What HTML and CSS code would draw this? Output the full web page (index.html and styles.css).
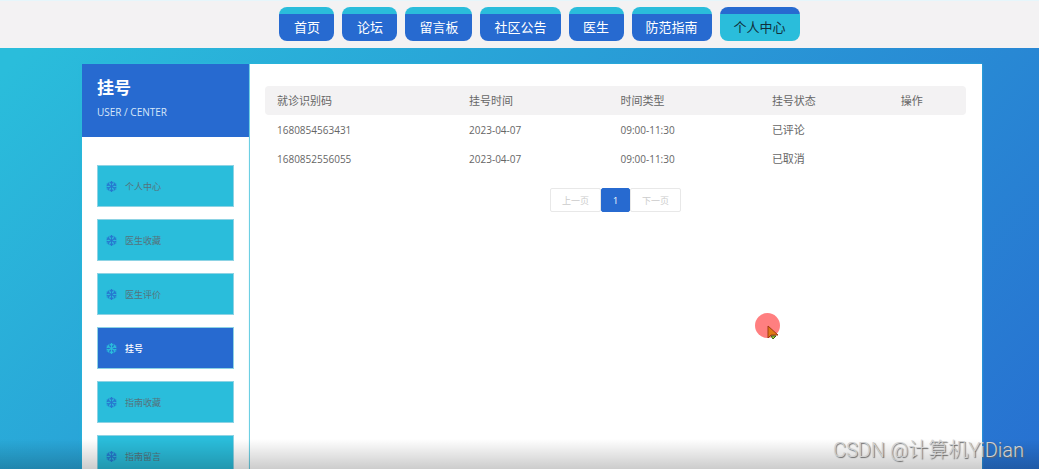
FILE: index.html
```html
<!DOCTYPE html>
<html lang="zh-CN">
<head>
<meta charset="utf-8">
<meta name="viewport" content="width=device-width, initial-scale=1">
<title>挂号</title>
<link rel="stylesheet" href="styles.css">
</head>
<body>
<svg class="symbols" aria-hidden="true">
  <symbol id="snow" viewBox="0 0 24 24">
    <g fill="none" stroke="currentColor" stroke-width="2.4">
      <g id="arm"><path d="M12 12V0M8 2l4 4 4-4"/></g>
      <use href="#arm" transform="rotate(60 12 12)"/>
      <use href="#arm" transform="rotate(120 12 12)"/>
      <use href="#arm" transform="rotate(180 12 12)"/>
      <use href="#arm" transform="rotate(240 12 12)"/>
      <use href="#arm" transform="rotate(300 12 12)"/>
    </g>
  </symbol>
</svg>
<header class="topbar">
  <nav class="topnav">
    <a class="tab" href="#">首页</a>
    <a class="tab" href="#">论坛</a>
    <a class="tab" href="#">留言板</a>
    <a class="tab" href="#">社区公告</a>
    <a class="tab" href="#">医生</a>
    <a class="tab" href="#">防范指南</a>
    <a class="tab tab-active" href="#">个人中心</a>
  </nav>
</header>
<div class="page">
  <aside class="sidebar">
    <div class="side-head">
      <h1 class="side-title">挂号</h1>
      <p class="side-sub">USER / CENTER</p>
    </div>
    <nav class="side-nav">
      <a class="side-link" href="#"><svg class="snow"><use href="#snow"/></svg>个人中心</a>
      <a class="side-link" href="#"><svg class="snow"><use href="#snow"/></svg>医生收藏</a>
      <a class="side-link" href="#"><svg class="snow"><use href="#snow"/></svg>医生评价</a>
      <a class="side-link side-active" href="#"><svg class="snow"><use href="#snow"/></svg>挂号</a>
      <a class="side-link" href="#"><svg class="snow"><use href="#snow"/></svg>指南收藏</a>
      <a class="side-link" href="#"><svg class="snow"><use href="#snow"/></svg>指南留言</a>
    </nav>
  </aside>
  <main class="content">
    <table class="records">
      <colgroup><col class="c-code"><col class="c-date"><col class="c-time"><col class="c-state"><col class="c-action"></colgroup>
      <thead>
        <tr><th>就诊识别码</th><th>挂号时间</th><th>时间类型</th><th>挂号状态</th><th>操作</th></tr>
      </thead>
      <tbody>
        <tr><td class="num">1680854563431</td><td class="num">2023-04-07</td><td class="num">09:00-11:30</td><td>已评论</td><td></td></tr>
        <tr><td class="num">1680852556055</td><td class="num">2023-04-07</td><td class="num">09:00-11:30</td><td>已取消</td><td></td></tr>
      </tbody>
    </table>
    <div class="pager">
      <button class="page-btn" type="button" disabled>上一页</button>
      <button class="page-btn page-current" type="button">1</button>
      <button class="page-btn" type="button" disabled>下一页</button>
    </div>
  </main>
</div>
<div class="shade"></div>
<div class="click-mark">
  <svg class="pointer" viewBox="0 0 12 16"><path d="M1 1v12l3-3h7z" fill="#e07a12" stroke="#a03a14"/><path d="M4 11l2 3 3-3z" fill="#a4dc3c" stroke="#3c5a14"/></svg>
</div>
<div class="watermark">CSDN @计算机YiDian</div>
</body>
</html>
```
FILE: styles.css
```css
* { box-sizing: border-box; }

body {
  margin: 0;
  height: 100vh;
  overflow: hidden;
  display: flex;
  flex-direction: column;
  font-family: "Open Sans", "Noto Sans CJK SC", sans-serif;
  font-size: 11px;
  color: #666;
  background: linear-gradient(135deg, #2abddb 5%, #276ad0 108%);
}

a { color: inherit; text-decoration: none; }

.symbols { position: absolute; width: 0; height: 0; }

.topbar {
  flex: none;
  height: 48px;
  padding: 6px 0 0 40px;
  background: #f3f2f3;
  border-top: 1px solid #e6f6fb;
}

.topnav { display: flex; justify-content: center; gap: 8px; }

.tab {
  min-width: 55px;
  height: 34px;
  padding: 8px 14px 0;
  border-radius: 8px;
  font-size: 13px;
  line-height: 24px;
  text-align: center;
  color: #fff;
  background: linear-gradient(#2abddb 7px, #276ad0 7px);
}

.tab-active {
  color: #10303c;
  background: linear-gradient(#276ad0 7px, #2abddb 7px);
}

.page {
  flex: 1;
  display: flex;
  margin: 16px 57px 0 82px;
}

.sidebar {
  flex: none;
  width: 168px;
  background: #fff;
  border-right: 1px solid #8ed8e6;
  box-shadow: 0 0 3px #2abddb;
}

.side-head {
  height: 73px;
  padding: 12px 15px;
  background: #276ad0;
  color: #fff;
}

.side-title { margin: 0; font-size: 17px; line-height: 24px; }

.side-sub { margin: 4px 0 0; font-size: 10px; line-height: 16px; color: #d7e7f9; }

.side-nav {
  display: flex;
  flex-direction: column;
  gap: 12px;
  padding: 28px 15px 0;
}

.side-link {
  display: flex;
  align-items: center;
  gap: 8px;
  height: 42px;
  padding: 0 8px;
  border: 1px solid #8dd3e4;
  font-size: 9px;
  color: #55737c;
  background: #2abddb;
}

.side-active { color: #fff; font-weight: 500; background: #276ad0; }

.snow { width: 11px; height: 11px; color: #2678d0; }

.side-active .snow { color: #2abddb; }

.content {
  flex: 1;
  min-width: 0;
  padding: 22px 16px 0 15px;
  background: #fff;
  box-shadow: 0 0 2px #2abddb;
}

.records {
  width: 100%;
  table-layout: fixed;
  border-collapse: separate;
  border-spacing: 0;
  text-align: left;
}

.c-code { width: 27.4%; }
.c-date { width: 21.6%; }
.c-time { width: 21.6%; }
.c-state { width: 18.4%; }
.c-action { width: 11%; }

.records th, .records td {
  height: 29px;
  padding: 0 12px;
  font-weight: 400;
  line-height: 16px;
}

.records th { background: #f3f2f3; }
.records th:first-child { border-radius: 4px 0 0 4px; }
.records th:last-child { border-radius: 0 4px 4px 0; }
.records .num { font-size: 10px; }

.pager { display: flex; justify-content: center; margin-top: 15px; }

.page-btn {
  height: 24px;
  padding: 0 11px;
  border: 1px solid #e8e8e8;
  border-radius: 2px;
  font-family: inherit;
  font-size: 9px;
  color: #ccc;
  background: #fff;
}

.page-current {
  width: 29px;
  border-color: #276ad0;
  color: #fff;
  background: #276ad0;
}

.shade {
  position: absolute;
  inset: auto 0 0;
  height: 30px;
  background: linear-gradient(rgba(0, 0, 0, 0), rgba(0, 0, 0, 0.2));
}

.click-mark {
  position: absolute;
  left: 755px;
  top: 313px;
  width: 25px;
  height: 25px;
  border-radius: 50%;
  background: #ff7f80;
}

.pointer {
  position: absolute;
  left: 12px;
  top: 12px;
  width: 12px;
  height: 16px;
}

.watermark {
  position: absolute;
  right: 15px;
  bottom: 6px;
  font-family: Roboto, "Noto Sans CJK SC", sans-serif;
  font-size: 20px;
  font-weight: 300;
  line-height: 26px;
  color: #d0d0d0;
  text-shadow: 1px 1px 1px #666;
}
```
